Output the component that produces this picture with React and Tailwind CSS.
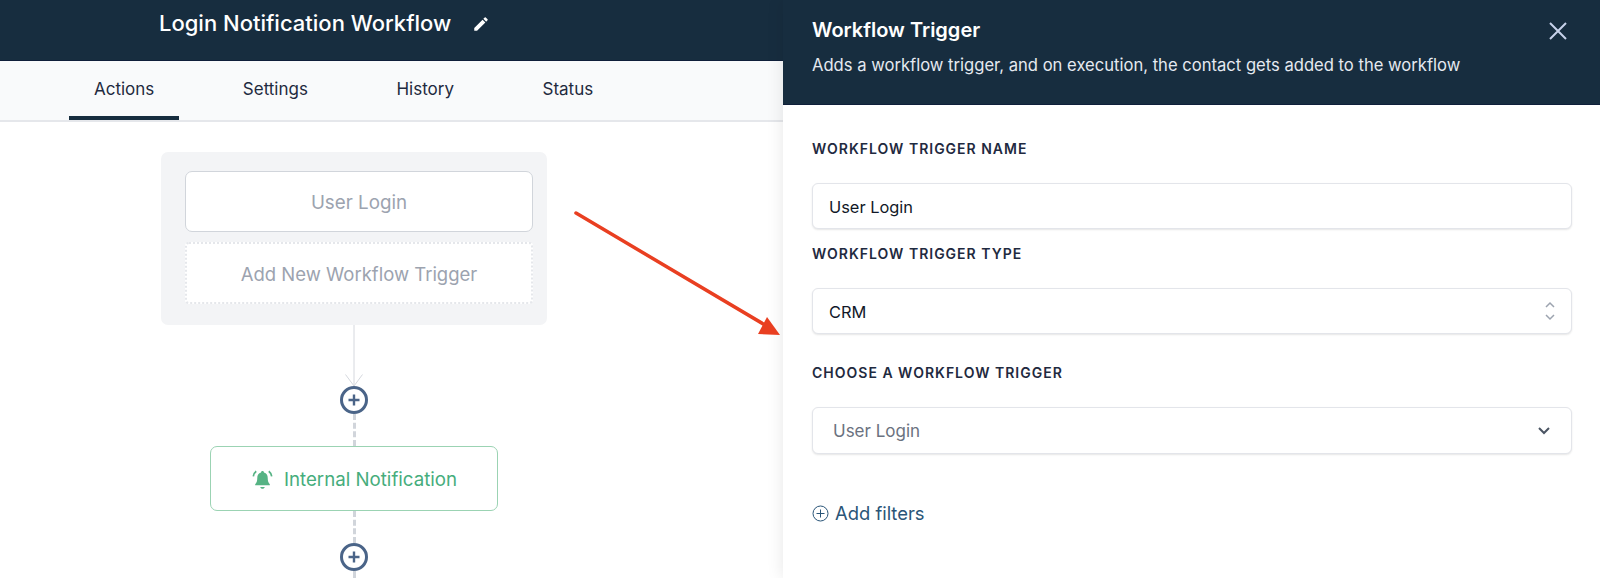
import React from "react";

const tabs = ["Actions", "Settings", "History", "Status"];

function AddButton() {
  return (
    <div className="w-[28px] h-[28px] shrink-0 rounded-full border-[3px] border-[#4a6488] bg-white flex items-center justify-center">
      <svg width="14" height="14" viewBox="0 0 14 14" fill="none" stroke="#4a6488" strokeWidth="2.4">
        <path d="M7 1.5v11M1.5 7h11" />
      </svg>
    </div>
  );
}

function Dashed({ height }) {
  return <div className="border-l-[3px] border-dashed border-[#d1d5db]" style={{ height }} />;
}

function Field({ label, className, children }) {
  return (
    <div className={className}>
      <div className="text-[14px] leading-[20px] font-semibold tracking-[1px] uppercase text-[#1f2a40]">{label}</div>
      {children}
    </div>
  );
}

function Box({ children, className }) {
  return (
    <div className={`flex items-center justify-between rounded-[6px] border border-[#e3e5ea] bg-white shadow-[0_1px_2px_rgba(0,0,0,0.1)] ${className}`}>
      {children}
    </div>
  );
}

function Canvas() {
  return (
    <div className="ml-[161px] w-[386px] mt-[30px] flex flex-col items-center">
      <div className="w-full h-[173px] rounded-[7px] bg-[#f3f4f6] pt-[19px] px-[24px] pr-[14px]">
        <div className="h-[61px] pt-[3px] rounded-[7px] border border-[#d1d5db] bg-white flex items-center justify-center text-[18.8px] text-[#9ca3af]">
          User Login
        </div>
        <div className="mt-[10px] h-[62px] pt-[3px] rounded-[4px] border-2 border-dotted border-[#e5e7eb] bg-white flex items-center justify-center text-[18.5px] text-[#9ca3af]">
          Add New Workflow Trigger
        </div>
      </div>
      <svg width="20" height="61" viewBox="0 0 20 61" fill="none" stroke="#d5d8de" strokeWidth="1" className="block">
        <path d="M10 0v61M1.5 49.5L10 61l8.5-11.5" />
      </svg>
      <AddButton />
      <Dashed height={32} />
      <div className="w-[288px] h-[65px] shrink-0 pt-[3px] rounded-[7px] border border-[#9bd3b3] bg-white flex items-center justify-center gap-[10px] text-[18.7px] text-[#46ad7c]">
        <svg width="23" height="22" viewBox="0 0 22 20" fill="#56b384">
          <path d="M11 1.5c.8 0 1.4.6 1.4 1.3 2.5.6 3.6 2.7 3.6 5.2 0 3 .6 4.3 2 6v1H4v-1c1.4-1.7 2-3 2-6 0-2.5 1.1-4.6 3.6-5.2 0-.7.6-1.3 1.4-1.3zM8.8 16.6h4.4c-.3 1-1.2 1.7-2.2 1.7s-1.9-.7-2.2-1.7z" />
          <path d="M5 1.6C3.4 2.8 2.4 4.6 2.2 6.6M17 1.6c1.6 1.2 2.6 3 2.8 5" fill="none" stroke="#56b384" strokeWidth="1.6" />
        </svg>
        Internal Notification
      </div>
      <Dashed height={32} />
      <AddButton />
      <Dashed height={10} />
    </div>
  );
}

function Panel() {
  return (
    <div className="relative z-10 flex-1 h-full bg-white shadow-[0_0_16px_rgba(0,0,0,0.1)]">
      <div className="h-[105px] bg-[#172d3f] pl-[29px] pr-[32px] pt-[16px] flex justify-between items-start border-b border-[#0f1f3a]">
        <div>
          <div className="text-[20px] leading-[28px] font-semibold text-white">Workflow Trigger</div>
          <div className="mt-[9px] text-[16.6px] leading-[24px] text-[#e5e9f0]">
            Adds a workflow trigger, and on execution, the contact gets added to the workflow
          </div>
        </div>
        <svg width="20" height="20" viewBox="0 0 20 20" fill="none" stroke="#c7d2ea" strokeWidth="2" className="mt-[5px]">
          <path d="M2 2l16 16M18 2L2 18" />
        </svg>
      </div>
      <div className="pl-[29px] pr-[28px] pt-[34px]">
        <Field label="Workflow Trigger Name">
          <Box className="h-[46px] mt-[24px] pl-[16px] pt-[2px] text-[16.4px] text-[#111827]">User Login</Box>
        </Field>
        <Field label="Workflow Trigger Type" className="mt-[15px]">
          <Box className="h-[46px] mt-[24px] pl-[16px] pr-[16px] pt-[2px] text-[16.4px] text-[#111827]">
            CRM
            <svg width="12" height="20" viewBox="0 0 12 20" fill="none" stroke="#9ca3af" strokeWidth="1.5" className="mt-[-2px] mr-[-1px]">
              <path d="M2 6l4-4 4 4M2 14l4 4 4-4" />
            </svg>
          </Box>
        </Field>
        <Field label="Choose a Workflow Trigger" className="mt-[29px]">
          <Box className="h-[47px] mt-[24px] pl-[20px] pr-[20px] pt-[2px] text-[17px] text-[#6b7280]">
            User Login
            <svg width="14" height="10" viewBox="0 0 14 10" fill="none" stroke="#4b5563" strokeWidth="2" className="mt-[-2px]">
              <path d="M2 2l5 5 5-5" />
            </svg>
          </Box>
        </Field>
        <div className="mt-[45px] flex items-center gap-[6px] text-[18.4px] leading-[28px] text-[#2a5578]">
          <svg width="17" height="17" viewBox="0 0 17 17" fill="none" stroke="#2a5578" strokeWidth="1">
            <circle cx="8.5" cy="8.5" r="7.5" />
            <path d="M8.5 4.5v8M4.5 8.5h8" />
          </svg>
          Add filters
        </div>
      </div>
    </div>
  );
}

export default function App() {
  return (
    <div className="relative w-[1600px] h-[578px] overflow-hidden flex bg-white font-['Inter',sans-serif]">
      <div className="w-[783px] h-full shrink-0">
        <div className="h-[61px] bg-[#172d3f] border-b border-[#0f1f3a] pl-[159px] flex items-center gap-[21px] pb-[13px]">
          <span className="text-[22px] font-medium text-white">Login Notification Workflow</span>
          <svg width="18" height="18" viewBox="0 0 24 24" fill="white">
            <path d="M3 17.25V21h3.75L17.81 9.94l-3.75-3.75L3 17.25zM20.71 7.04a1 1 0 0 0 0-1.41l-2.34-2.34a1 1 0 0 0-1.41 0l-1.83 1.83 3.75 3.75 1.83-1.83z" />
          </svg>
        </div>
        <div className="h-[61px] bg-[#f9fafb] border-b-2 border-[#e5e7eb] pl-[69px] flex gap-[38.5px]">
          {tabs.map((tab, i) => (
            <div
              key={tab}
              className={`h-[59px] px-[25px] pt-[2px] flex items-center text-[17px] text-[#1f2a40] border-b-4 ${
                i === 0 ? "border-[#172d3f]" : "border-transparent"
              }`}
            >
              {tab}
            </div>
          ))}
        </div>
        <Canvas />
      </div>
      <Panel />
      {/* red arrow pointing at the panel */}
      <svg width="230" height="140" viewBox="0 0 230 140" fill="none" className="absolute left-[565px] top-[205px] z-20">
        <path d="M11 8L200 120" stroke="#e93f21" strokeWidth="3.5" strokeLinecap="round" />
        <path d="M202 112L215 130L193 129Z" fill="#e93f21" />
      </svg>
    </div>
  );
}
